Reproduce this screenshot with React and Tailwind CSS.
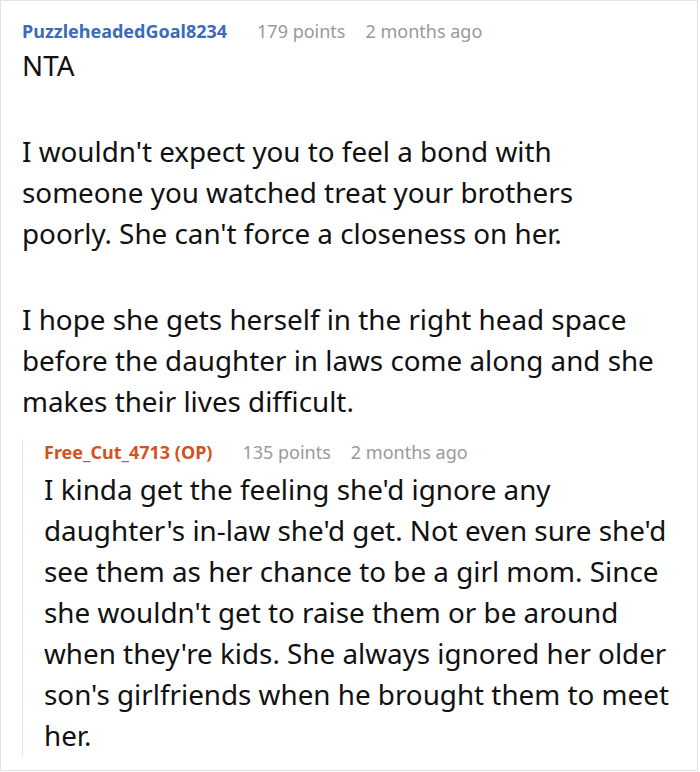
export default function App() {
  return (
    <div className="w-[700px] h-[772px] bg-white" style={{ fontFamily: '"Noto Sans", "Open Sans", sans-serif' }}>
      <div className="h-[771px] w-[698px] border border-[#e3e3e3] pl-[21px] pr-[14px] pt-[17px] overflow-hidden">
        <div className="flex items-baseline text-[18px] leading-[26px]">
          <span className="font-bold text-[#3b6cb8]">PuzzleheadedGoal8234</span>
          <span className="text-[#999999] ml-[30px]">179 points</span>
          <span className="text-[#999999] ml-[20px]">2 months ago</span>
        </div>
        <div className="text-[27.8px] leading-[41px] text-[#111] mt-[1px] pr-[14px]">
          <p>NTA</p>
          <p className="mt-[45px]">
            I wouldn't expect you to feel a bond with someone you watched treat your brothers poorly. She can't force a closeness on her.
          </p>
          <p className="mt-[45px]">
            I hope she gets herself in the right head space before the daughter in laws come along and she makes their lives difficult.
          </p>
        </div>
        <div className="mt-[17px] border-l border-[#e3e3e3] pl-[21px]">
          <div className="flex items-baseline text-[18px] leading-[26px]">
            <span className="font-bold text-[#d4521d]">Free_Cut_4713 (OP)</span>
            <span className="text-[#999999] ml-[30px]">135 points</span>
            <span className="text-[#999999] ml-[20px]">2 months ago</span>
          </div>
          <p className="text-[27.8px] leading-[41px] text-[#111] mt-[4px]">
            I kinda get the feeling she'd ignore any daughter's in-law she'd get. Not even sure she'd see them as her chance to be a girl mom. Since she wouldn't get to raise them or be around when they're kids. She always ignored her older son's girlfriends when he brought them to meet her.
          </p>
        </div>
      </div>
    </div>
  );
}
